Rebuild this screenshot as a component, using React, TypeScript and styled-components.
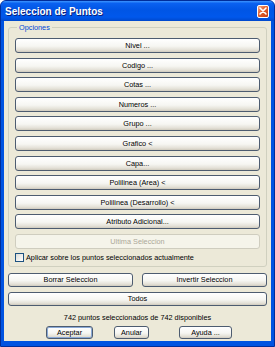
import styled, { createGlobalStyle } from 'styled-components';

const GlobalStyle = createGlobalStyle`
  html, body {
    margin: 0;
    padding: 0;
    background: #ffffff;
  }
  * {
    box-sizing: border-box;
  }
`;

const Window = styled.div`
  width: 275px;
  height: 347px;
  display: flex;
  flex-direction: column;
  background: #0053e1;
  border: 1px solid #002d9a;
  border-radius: 6px 6px 0 0;
  font-family: 'Liberation Sans', Arial, sans-serif;
  font-size: 7.3px;
  color: #000000;
  overflow: hidden;
`;

const TitleBar = styled.div`
  height: 20px;
  flex: none;
  display: flex;
  align-items: center;
  justify-content: space-between;
  padding: 0 5px 0 4px;
  background: linear-gradient(
    to bottom,
    #3d95ff 0%,
    #0a61f0 12%,
    #0055e5 45%,
    #0058ec 80%,
    #0048cc 100%
  );
`;

const Title = styled.span`
  color: #ffffff;
  font-weight: bold;
  font-size: 10px;
  text-shadow: 1px 1px 0 #0a1e7a;
`;

const CloseButton = styled.div`
  width: 12px;
  height: 13px;
  border: 1px solid #ffffff;
  border-radius: 2px;
  background: linear-gradient(135deg, #f4a684 0%, #e2602e 45%, #c63e12 100%);
  display: flex;
  align-items: center;
  justify-content: center;
`;

const Client = styled.div`
  flex: 1;
  margin: 0 3px 5px 3px;
  background: #ece9d8;
  display: flex;
  flex-direction: column;
  padding: 2px 4px 0 4px;
`;

const Group = styled.fieldset`
  margin: 0;
  border: 1px solid #d0d0bf;
  border-radius: 3px;
  padding: 0 6px 3px 6px;
`;

const Legend = styled.legend`
  color: #0046d5;
  padding: 0 2px;
  margin-left: 2px;
  font-size: 7.3px;
  line-height: 9px;
`;

const ButtonList = styled.div`
  display: flex;
  flex-direction: column;
  gap: 4.6px;
  margin-top: 6px;
`;

const Button = styled.div<{
  $disabled?: boolean;
  $default?: boolean;
  $width?: number;
  $height?: number;
  $grow?: boolean;
}>`
  height: ${(p) => p.$height ?? 15}px;
  ${(p) => (p.$width ? `width: ${p.$width}px;` : '')}
  flex: ${(p) => (p.$grow ? '1 1 0' : 'none')};
  display: flex;
  align-items: center;
  justify-content: center;
  border-radius: 3px;
  border: 1px solid ${(p) => (p.$disabled ? '#cfcdbf' : '#4d5c70')};
  background: ${(p) =>
    p.$disabled
      ? '#f5f4ea'
      : 'linear-gradient(to bottom, #ffffff 0%, #f6f6f2 55%, #e3e0d6 85%, #cfcabd 100%)'};
  color: ${(p) => (p.$disabled ? '#aca899' : '#000000')};
  box-shadow: ${(p) => (p.$default ? 'inset 0 0 0 1px #8aa9d6' : 'none')};
  white-space: nowrap;
`;

const CheckRow = styled.div`
  display: flex;
  align-items: center;
  gap: 2px;
  margin-top: 4px;
  height: 10px;
`;

const CheckBox = styled.div`
  width: 9px;
  height: 9px;
  border: 1px solid #1c5180;
  background: linear-gradient(135deg, #dcdcd7 0%, #ffffff 100%);
`;

const Row = styled.div<{ $gap?: number; $top?: number }>`
  display: flex;
  gap: ${(p) => p.$gap ?? 0}px;
  margin-top: ${(p) => p.$top ?? 0}px;
`;

const Status = styled.div`
  text-align: center;
  margin-top: 7px;
  line-height: 10px;
`;

const Footer = styled.div`
  display: flex;
  justify-content: center;
  margin-top: 3px;
  padding-left: 3px;
`;

const FooterSlot = styled.div<{ $left: number }>`
  margin-left: ${(p) => p.$left}px;
  display: flex;
`;

const options = [
  'Nivel ...',
  'Codigo ...',
  'Cotas ...',
  'Numeros ...',
  'Grupo ...',
  'Grafico <',
  'Capa...',
  'Polilinea (Area) <',
  'Polilinea (Desarrollo) <',
  'Atributo Adicional...',
];

const App = () => {
  return (
    <>
      <GlobalStyle />
      <Window>
        <TitleBar>
          <Title>Seleccion de Puntos</Title>
          <CloseButton>
            <svg width="8" height="8" viewBox="0 0 8 8">
              <path d="M1 1 L7 7 M7 1 L1 7" stroke="#ffffff" strokeWidth="1.6" strokeLinecap="round" />
            </svg>
          </CloseButton>
        </TitleBar>
        <Client>
          <Group>
            <Legend>Opciones</Legend>
            <ButtonList>
              {options.map((o) => (
                <Button key={o}>{o}</Button>
              ))}
              <Button $disabled>Ultima Seleccion</Button>
            </ButtonList>
            <CheckRow>
              <CheckBox />
              <span>Aplicar sobre los puntos seleccionados actualmente</span>
            </CheckRow>
          </Group>
          <Row $gap={9} $top={6}>
            <Button $grow $height={14}>Borrar Seleccion</Button>
            <Button $grow $height={14}>Invertir Seleccion</Button>
          </Row>
          <Row $top={5}>
            <Button $grow $height={14}>Todos</Button>
          </Row>
          <Status>742 puntos seleccionados de 742 disponibles</Status>
          <Footer>
            <FooterSlot $left={0}>
              <Button $default $width={47} $height={13}>Aceptar</Button>
            </FooterSlot>
            <FooterSlot $left={21}>
              <Button $width={35} $height={13}>Anular</Button>
            </FooterSlot>
            <FooterSlot $left={30}>
              <Button $width={53} $height={13}>Ayuda ...</Button>
            </FooterSlot>
          </Footer>
        </Client>
      </Window>
    </>
  );
};

export default App;
